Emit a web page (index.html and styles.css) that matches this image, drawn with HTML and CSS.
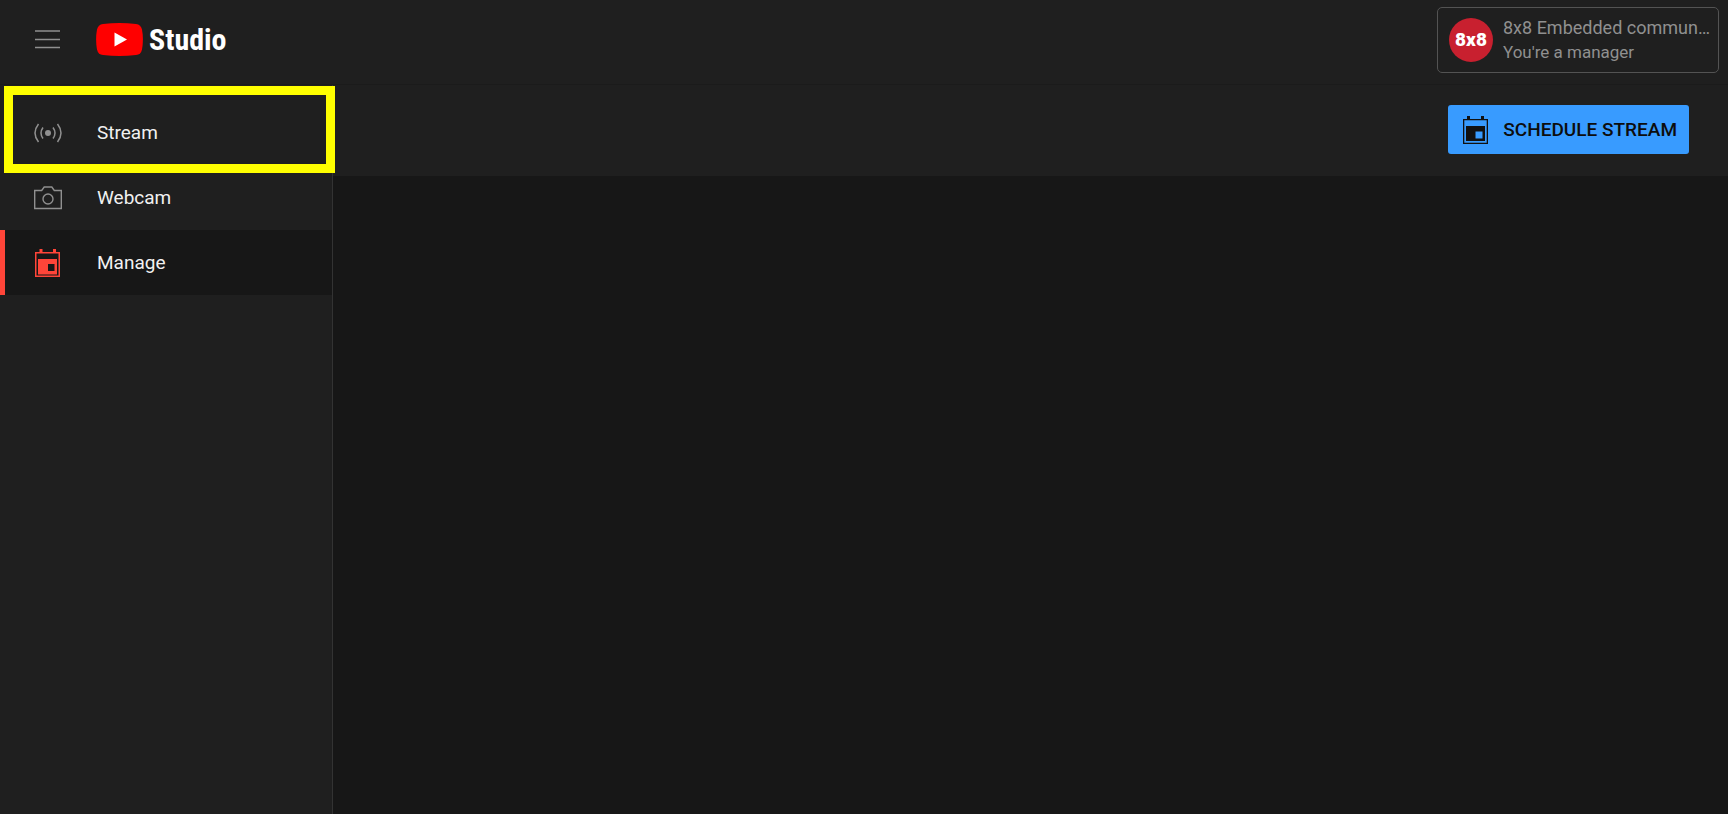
FILE: index.html
```html
<!DOCTYPE html>
<html lang="en">
<head>
    <meta charset="UTF-8">
    <meta name="viewport" content="width=device-width, initial-scale=1.0">
    <title>YouTube Studio</title>
    <link rel="stylesheet" href="styles.css">
</head>
<body>
    <header class="header">
        <button class="menu-button" type="button" aria-label="Menu">
            <svg width="25" height="19" viewBox="0 0 25 19" fill="none" stroke="#909090" stroke-width="1.5">
                <path d="M0 1h25M0 9.500h25M0 17.500h25"/>
            </svg>
        </button>
        <a class="logo" href="#" aria-label="YouTube Studio">
            <svg width="47" height="33" viewBox="0 0 47 33">
                <path fill="#ff0000" d="M7 .9Q23.500-.9 40 .9Q45 1.500 46 6.500Q47.800 16.500 46 26.500Q45 31.500 40 32.100Q23.500 33.900 7 32.100Q2 31.500 1 26.500Q-.8 16.500 1 6.500Q2 1.500 7 .9Z"/>
                <path fill="#fff" d="M18.500 9.500v14l12.500-7z"/>
            </svg>
            <span class="logo-text">Studio</span>
        </a>
        <button class="account" type="button">
            <span class="avatar">8x8</span>
            <span class="account-info">
                <span class="account-name">8x8 Embedded commun…</span>
                <span class="account-role">You're a manager</span>
            </span>
        </button>
    </header>

    <div class="layout">
        <nav class="sidebar">
            <a class="nav-item" href="#">
                <svg class="nav-icon" width="28" height="28" viewBox="0 0 28 28" fill="none" stroke="#909090" stroke-width="1.5">
                    <circle cx="14" cy="14" r="3" fill="#909090" stroke="none"/>
                    <path d="M9 8.500Q5 14 9 19.500M19 8.500Q23 14 19 19.500M4.500 5Q-2.500 14 4.500 23M23.500 5Q30.500 14 23.500 23"/>
                </svg>
                Stream
            </a>
            <a class="nav-item" href="#">
                <svg class="nav-icon" width="28" height="28" viewBox="0 0 28 28" fill="none" stroke="#909090" stroke-width="1.400">
                    <path d="M.7 6.500h7l2.500-3.500h7.600l2.500 3.500h7v18h-26.600z"/>
                    <circle cx="14" cy="15" r="5"/>
                </svg>
                Webcam
            </a>
            <a class="nav-item active" href="#">
                <svg class="nav-icon" width="28" height="28" viewBox="0 0 28 28" fill="#ff4539">
                    <path fill-rule="evenodd" d="M1 3h4.500V0h3v3h10.500V0h3v3H26v25H1zM2.500 4.500v22h22v-22zM4 10h19v15.500H4zM14 15v7h6.500v-7z"/>
                </svg>
                Manage
            </a>
            <div class="highlight"></div>
        </nav>

        <main class="main">
            <div class="toolbar">
                <button class="schedule-button" type="button">
                    <svg width="25" height="28" viewBox="0 0 25 28" fill="#111">
                        <path fill-rule="evenodd" d="M0 3h4V0h3v3h11V0h3v3h4v25H0zM1.300 4.300v22.400h22.400V4.300zM3 10h19v15H3zM12.500 15.500v7h7v-7z"/>
                    </svg>
                    SCHEDULE STREAM
                </button>
            </div>
        </main>
    </div>
</body>
</html>
```
FILE: styles.css
```css
* {
    box-sizing: border-box;
}

body {
    margin: 0;
    min-height: 100vh;
    display: flex;
    flex-direction: column;
    font-family: Roboto, sans-serif;
    background-color: #171717;
    color: #f1f1f1;
}

button {
    font-family: inherit;
    cursor: pointer;
}

a {
    color: inherit;
    text-decoration: none;
}

.header {
    display: flex;
    align-items: center;
    height: 85px;
    padding: 0 9px 5px 35px;
    background-color: #1f1f1f;
    border-bottom: 1px solid #1b1b1b;
}

.menu-button {
    display: flex;
    padding: 0;
    border: 0;
    background: none;
}

.logo {
    display: flex;
    align-items: center;
    gap: 6px;
    margin-left: 36px;
}

.logo-text {
    color: #fff;
    font-family: "Roboto Condensed", "Liberation Sans Narrow", Roboto, sans-serif;
    font-size: 30px;
    font-weight: 700;
    line-height: 32px;
}

.account {
    display: flex;
    align-items: center;
    gap: 10px;
    min-width: 282px;
    height: 66px;
    margin-left: auto;
    padding: 0 8px 0 11px;
    border: 1px solid #535353;
    border-radius: 5px;
    background: none;
    color: #909090;
    text-align: left;
}

.avatar {
    display: flex;
    flex-shrink: 0;
    align-items: center;
    justify-content: center;
    width: 44px;
    height: 44px;
    border-radius: 50%;
    background-color: #c8202f;
    color: #fff;
    font-size: 19px;
    font-weight: 900;
}

.account-name,
.account-role {
    display: block;
    white-space: nowrap;
    line-height: 25px;
}

.account-name {
    font-size: 18px;
}

.account-role {
    font-size: 17px;
}

.layout {
    display: flex;
    flex: 1;
}

.sidebar {
    position: relative;
    width: 333px;
    padding-top: 15px;
    background-color: #1f1f1f;
    border-right: 1px solid #333;
}

.nav-item {
    display: flex;
    align-items: center;
    gap: 35px;
    height: 65px;
    padding-left: 29px;
    border-left: 5px solid transparent;
    font-size: 19px;
}

.nav-item.active {
    border-left-color: #ff4539;
    background-color: #171717;
}

/* yellow frame around the first item */
.highlight {
    position: absolute;
    top: 1px;
    left: 4px;
    right: -3px;
    height: 87px;
    border: 9px solid #ffff00;
    pointer-events: none;
}

.main {
    flex: 1;
}

.toolbar {
    display: flex;
    align-items: center;
    justify-content: flex-end;
    height: 91px;
    padding: 0 39px 2px 0;
    background-color: #1f1f1f;
}

.schedule-button {
    display: flex;
    align-items: center;
    gap: 15px;
    height: 49px;
    padding: 0 12px 0 15px;
    border: 0;
    border-radius: 3px;
    background-color: #389bff;
    color: #0d0d0d;
    font-size: 19px;
    font-weight: 500;
}
```
